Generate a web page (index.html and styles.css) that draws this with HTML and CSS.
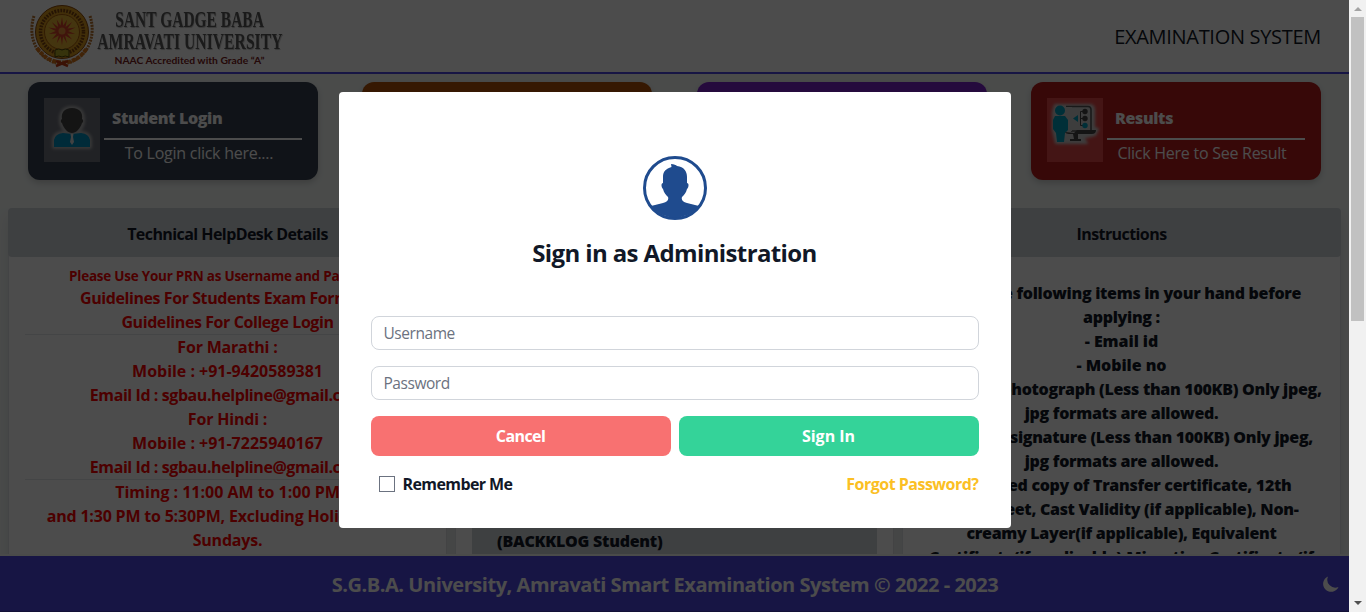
FILE: index.html
```html
<!DOCTYPE html>
<html lang="en">
<head>
<meta charset="utf-8">
<title>Examination System</title>
<link rel="stylesheet" href="styles.css">
</head>
<body>
<div class="window">
<div class="page">
  <header class="topbar">
    <div class="brand">
      <svg class="crest" width="66" height="64" viewBox="0 0 66 64">
        <path d="M5 12C-1 30 5 52 27 59M61 12C67 30 61 52 39 59" fill="none" stroke="#b9732c" stroke-width="3" stroke-dasharray="2 1"/>
        <path d="M8 44Q18 58 33 58.500T58 44" fill="none" stroke="#d9761a" stroke-width="4" stroke-dasharray="4 1"/>
        <path d="M27 57l12 5M39 57l-12 5" stroke="#c43b13" stroke-width="2.500"/>
        <circle cx="33" cy="28" r="26.500" fill="#d99a1f" stroke="#8e4a0a" stroke-width="1"/>
        <circle cx="33" cy="28" r="21.500" fill="none" stroke="#7d4510" stroke-width="3.500" stroke-dasharray="1.800 1.200"/>
        <circle cx="33" cy="28" r="17.500" fill="#e5b234" stroke="#a55b0c"/>
        <path d="M33 13l1.300 8.500 3.800-6-1.500 7.500 6.500-5-4.500 6.500 8-1-7.500 3.500 7 3-8-.500 5 6-7-4 2 8-4-7-1.100 9-1.300-9-4 7 2-8-7 4 5-6-8 .500 7-3-7.500-3.500 8 1-4.500-6.500 6.500 5-1.500-7.500 3.800 6z" fill="#d8442a"/>
        <circle cx="33" cy="27" r="3.500" fill="#e8903a"/>
        <path d="M26 46q4-2 7 0 3-2 7 0v7q-4-2-7 0-3-2-7 0z" fill="#b5ab2a" stroke="#4d4609"/>
      </svg>
      <div class="brand-text">
        <span class="brand-a">SANT GADGE BABA</span>
        <span class="brand-b">AMRAVATI UNIVERSITY</span>
        <span class="brand-c">NAAC Accredited with Grade “A”</span>
      </div>
    </div>
    <div class="system">EXAMINATION SYSTEM</div>
  </header>

  <section class="cards">
    <div class="card slate">
      <div class="thumb"><svg width="56" height="64" viewBox="0 0 56 64">
        <g class="halo" fill="none" stroke="#bbb" stroke-width="4" stroke-linejoin="round"><path d="M28 10c-8 0-11 5-11 12 0 8 6 13 11 13s11-5 11-13c0-7-3-12-11-12zM10 49v-7q1-7 9-7l9 3 9-3q8 0 9 7v7z"/></g>
        <path d="M10 49v-7q1-6 9-7l9 1 9-1q8 1 9 7v7z" fill="#008fc0"/>
        <path d="M26.500 36h3l-.500 3 1 5-2 3-2-3 1-5z" fill="#ddd"/>
        <path d="M28 10c-8 0-11 5-10 11-2 1-1 4 0 4 2 6 6 10 10 10s8-4 10-10c1 0 2-3 0-4 1-6-2-11-10-11z" fill="#454545"/>
      </svg></div>
      <div class="card-body"><h3>Student Login</h3><p>To Login click here....</p></div>
    </div>
    <div class="card amber"></div>
    <div class="card purple"></div>
    <div class="card red">
      <div class="thumb"><svg width="56" height="64" viewBox="0 0 56 64">
        <path class="halo" d="M8 7h35q4 0 4 5v18l4 1-3 6-12 3 4 5H9L6 32V14z" fill="#ccc" stroke="#ccc" stroke-width="2" stroke-linejoin="round"/>
        <path d="M19 8.500h22q3 0 3 3V33H24" fill="#ccc" stroke="#555" stroke-width="1.600"/>
        <path d="M19 9v24h6V9z" fill="#ccc"/>
        <circle cx="13" cy="12.500" r="5" fill="#009dbb"/>
        <path d="M8 18h10l3 4v10l-3 3-1 9h-7l-1-9-3-4v-9z" fill="#009dbb"/>
        <path d="M38 13.500h-4.500v14H38M33 20.500h5" fill="none" stroke="#444" stroke-width="1"/>
        <circle cx="38" cy="13.500" r="2.700" fill="#444"/><circle cx="38" cy="20.500" r="2.700" fill="#444"/><circle cx="38" cy="27.500" r="2.700" fill="#009dbb"/>
        <path d="M31 17v7l-5-3.500z" fill="#009dbb"/>
        <path d="M18 34l9 1 3-3h19q0 4-4 4H22q-3 0-4-2zM26 36h5v5h3v2H23v-2h4z" fill="#444"/>
      </svg></div>
      <div class="card-body"><h3>Results</h3><p>Click Here to See Result</p></div>
    </div>
  </section>

  <main class="columns">
    <section class="panel">
      <h2>Technical HelpDesk Details</h2>
      <div class="panel-body help">
        <p class="small">Please Use Your PRN as Username and Password</p>
        <p class="tight">Guidelines For Students Exam Form Fill</p>
        <p class="tight">Guidelines For College Login</p>
        <hr>
        <p>For Marathi :</p>
        <p class="wide">Mobile : +91-9420589381</p>
        <p class="tight">Email Id : sgbau.helpline@gmail.com</p>
        <p>For Hindi :</p>
        <p class="wide">Mobile : +91-7225940167</p>
        <p class="tight">Email Id : sgbau.helpline@gmail.com</p>
        <hr>
        <p class="wide">Timing : 11:00 AM to 1:00 PM</p>
        <p>and 1:30 PM to 5:30PM, Excluding Holidays and</p>
        <p>Sundays.</p>
      </div>
    </section>
    <section class="panel">
      <h2></h2>
      <div class="panel-body notices"><div class="notice">(BACKKLOG Student)</div></div>
    </section>
    <section class="panel">
      <h2>Instructions</h2>
      <div class="panel-body steps">
        <p>Keep the following items in your hand before</p>
        <p>applying :</p>
        <p class="short">- Email id</p>
        <p class="short">- Mobile no</p>
        <p>- Scanned photograph (Less than 100KB) Only jpeg,</p>
        <p>jpg formats are allowed.</p>
        <p>- Scanned signature (Less than 100KB) Only jpeg,</p>
        <p>jpg formats are allowed.</p>
        <p>- Scanned copy of Transfer certificate, 12th</p>
        <p>Marksheet, Cast Validity (if applicable), Non-</p>
        <p>creamy Layer(if applicable), Equivalent</p>
        <p>Certificate(if applicable),Migration Certificate (if</p>
      </div>
    </section>
  </main>
  <footer class="footer">
    <span>S.G.B.A. University, Amravati Smart Examination System © 2022 - 2023</span>
    <svg class="moon" width="16" height="16" viewBox="0 0 16 16"><path d="M5 .5A8 8 0 1 0 15.500 11 8 8 0 0 1 5 .5z" fill="#fff"/></svg>
  </footer>
  <div class="overlay">
    <form class="modal">
      <svg class="avatar" width="64" height="64" viewBox="0 0 64 64">
        <circle cx="32" cy="32" r="30.500" fill="#fff" stroke="#1f4b8e" stroke-width="3"/>
        <path d="M28 8c3 0 5 1 6 2 7 1 10 5 10 11v6c2 0 2 4 0 6-1 4-3 6-5 8-1 3 1 5 5 6l12 3A31 31 0 0 1 8 50l12-3c4-1 6-3 5-6-2-2-4-4-5-8-2-2-2-6 0-6v-6c0-6 3-8 8.500-10z" fill="#1f4b8e"/>
      </svg>
      <h1>Sign in as Administration</h1>
      <input class="field" type="text" placeholder="Username">
      <input class="field" type="password" placeholder="Password">
      <div class="actions"><button type="button" class="cancel">Cancel</button><button type="button" class="signin">Sign In</button></div>
      <div class="options"><label><span class="box"></span>Remember Me</label><a>Forgot Password?</a></div>
    </form>
  </div>
</div>
<div class="scrollbar"><i class="up"></i><div class="thumb-bar"></div><i class="down"></i></div>
</div>
</body>
</html>
```
FILE: styles.css
```css
* { box-sizing: border-box; margin: 0; padding: 0; }
body { font: 400 16px/24px "Open Sans", "Noto Sans", sans-serif; color: #111827; overflow: hidden; }
.window { display: flex; width: 1366px; height: 612px; }
.page { position: relative; width: 1349px; height: 612px; display: flex; flex-direction: column; background: #f7fbf9; overflow: hidden; }
.topbar { flex: none; height: 74px; border-bottom: 2px solid #4f46e5; background: #fff; display: flex; justify-content: space-between; align-items: center; padding: 0 28px 0 29px; }
.brand { display: flex; gap: 1px; }
.brand-text { display: flex; flex-direction: column; align-items: center; width: 187px; font-family: "Liberation Serif", serif; font-weight: 700; white-space: nowrap; padding-top: 5px; }
.brand-a, .brand-b { font-size: 22px; line-height: 22px; color: #595959; text-shadow: 1px 1px 1px #bbb; }
.brand-a { transform: scale(.704, 1.06); }
.brand-b { transform: scale(.713, 1.06); }
.brand-c { font: 700 10.300px/12px Lato, sans-serif; color: #7b2020; padding-top: 1px; }
.system { font-size: 20px; line-height: 28px; letter-spacing: -.3px; padding-top: 2px; }
.cards { flex: none; display: grid; grid-template-columns: repeat(4, 290px); justify-content: space-between; padding: 8px 28px 0; height: 134px; }
.card { height: 98px; border-radius: 12px; padding: 16px; display: flex; gap: 4px; color: #fff; box-shadow: 0 3px 6px rgba(0,0,0,.18); }
.slate { background: #374151; }
.amber { background: #b45309; }
.purple { background: #7e22ce; }
.red { background: #b91c1c; }
.thumb { width: 56px; height: 64px; }
.slate .thumb { background: #70737d; }
.red .thumb { background: #e54848; }
.thumb svg { display: block; }
.halo { filter: blur(1.500px); }
.card-body { width: 198px; padding-top: 8px; }
.card-body h3 { font-size: 16px; line-height: 25px; height: 34px; font-weight: 800; border-bottom: 2px solid #fff; padding-left: 8px; letter-spacing: -.35px; }
.card-body p { text-align: center; line-height: 26px; padding-right: 8px; letter-spacing: -.26px; }
.columns { flex: none; height: 346px; display: grid; grid-template-columns: repeat(3, 439px); gap: 8px; padding: 0 8px; overflow: hidden; }
.panel { background: #fff; border: 1px solid #e2e4e6; border-radius: 5px; box-shadow: 0 8px 16px rgba(0,0,0,.1); height: 380px; }
.panel h2 { margin: -1px; height: 49px; background: #d1d5db; border-radius: 4px; font-size: 16px; line-height: 52px; font-weight: 680; letter-spacing: -.57px; text-align: center; }
.panel-body { display: flex; flex-direction: column; align-items: center; white-space: nowrap; padding: 8px 16px; }
.help { color: #f00; }
.help p { font-weight: 680; letter-spacing: -.2px; }
.help .tight { letter-spacing: -.42px; }
.help .wide { letter-spacing: -.02px; }
.help .small { font-size: 13.500px; line-height: 24px; margin-bottom: -2px; letter-spacing: -.24px; }
.help hr { width: 100%; border: 0; border-top: 1px solid #e5e7eb; }
.steps { padding-top: 25px; }
.steps p { font-weight: 800; letter-spacing: -.3px; }
.steps .short { letter-spacing: -.05px; }
.notices { height: 320px; }
.notice { width: 405px; height: 320px; background: #d1d5db; padding: 265px 0 0 25px; font-weight: 800; letter-spacing: -.25px; }
.footer { margin-top: auto; height: 56px; background: #4f46e5; color: #fff; display: grid; grid-template-columns: 24px 1fr 24px; align-items: center; padding: 0 2px 0 3px; border-bottom: 1px solid #3f38b5; }
.footer span { grid-column: 2; text-align: center; font-size: 20px; line-height: 28px; font-weight: 680; letter-spacing: -.45px; padding-right: 20px; padding-top: 3px; }
.overlay { position: absolute; inset: 0; background: rgba(0,0,0,.7); display: flex; align-items: flex-start; justify-content: center; padding-top: 92px; }
.modal { width: 672px; height: 436px; background: #fff; border-radius: 4px; padding: 64px 32px 0; display: flex; flex-direction: column; align-items: center; }
.modal h1 { font-size: 24px; line-height: 32px; font-weight: 680; letter-spacing: -.62px; margin: 17px 0 47px; }
.field { width: 608px; height: 34px; border: 1px solid #d1d5db; border-radius: 8px; padding: 0 12px; font: 400 15.500px/24px "Open Sans", sans-serif; letter-spacing: -.45px; margin-bottom: 16px; }
.field::placeholder { color: #6b7280; opacity: 1; }
.actions { display: flex; gap: 8px; width: 608px; }
.actions button { flex: 1; height: 40px; border: 0; border-radius: 8px; color: #fff; font: 700 16px/24px "Open Sans", sans-serif; }
.actions .cancel { background: #f87171; letter-spacing: -.6px; }
.signin { background: #34d399; }
.options { width: 608px; display: flex; justify-content: space-between; padding: 16px 0 0 8px; font-weight: 680; letter-spacing: -.6px; }
.options label { display: flex; align-items: center; gap: 8px; }
.box { width: 16px; height: 16px; border: 1px solid #6b7280; }
.options a { color: #fbbf24; font-weight: 700; letter-spacing: -.5px; }
.scrollbar { width: 17px; height: 612px; background: #f1f1f1; display: flex; flex-direction: column; align-items: center; }
.up { margin-top: 7px; border: 4px solid transparent; border-top: 0; border-bottom: 4px solid #a3a3a3; }
.thumb-bar { width: 13px; height: 304px; margin-top: 6px; background: #c1c1c1; }
.down { margin: auto 0 7px; border: 4px solid transparent; border-bottom: 0; border-top: 4px solid #505050; }
```
